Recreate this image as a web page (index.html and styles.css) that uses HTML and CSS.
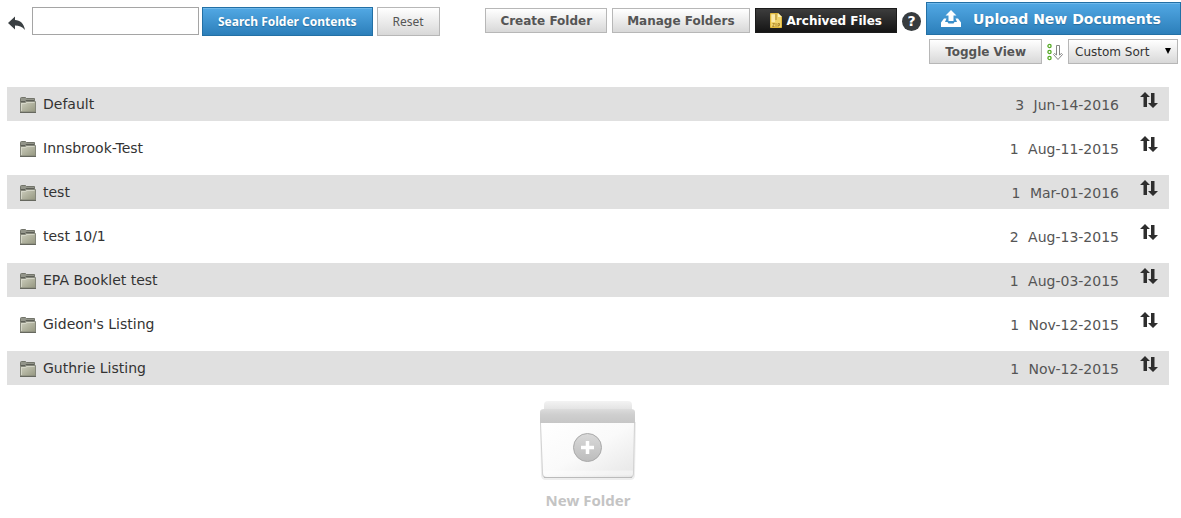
FILE: index.html
```html
<!DOCTYPE html>
<html lang="en">
<head>
    <meta charset="UTF-8">
    <meta name="viewport" content="width=device-width, initial-scale=1.0">
    <title>Documents</title>
    <link rel="stylesheet" href="styles.css">
</head>
<body>
    <!-- shared icons -->
    <svg class="sprite" width="0" height="0" aria-hidden="true">
        <defs>
            <linearGradient id="folderFill" x1="0" y1="0" x2="1" y2="1">
                <stop offset="0" stop-color="#cfd0c0"/>
                <stop offset="1" stop-color="#94967f"/>
            </linearGradient>
            <symbol id="icon-folder" viewBox="0 0 18 18">
                <path d="M1.500 15V2.500Q1.500 1.500 2.500 1.500H6.500L7.500 2.500H15.500V15Z" fill="#93958a" stroke="#73756b"/>
                <path d="M2 5.500H6L7 4.500H15" fill="none" stroke="#5d5f57"/>
                <path d="M1.500 16V6.500H6L7.500 5.500H16.500V16Z" fill="url(#folderFill)" stroke="#85877b"/>
                <path d="M2.500 15V7.500H6.500L8 6.500H15.500" fill="none" stroke="#dedfd3" stroke-opacity=".7"/>
                <path d="M1 16.500H17" stroke="#66685f"/>
            </symbol>
            <symbol id="icon-sort" viewBox="0 0 18 16">
                <path d="M5 0L10 5H7V15H3.500V5H0Z" fill="#2e2e2e"/>
                <path d="M13 16L18 11H14.500V1H11V11H8Z" fill="#2e2e2e"/>
            </symbol>
        </defs>
    </svg>

    <div class="header">
        <form class="search" onsubmit="return false">
            <a href="#" class="back" aria-label="Back">
                <svg width="18" height="15" viewBox="0 0 18 15"><path d="M1 7L8 .5V4C13 4 17 7.500 18 14C15 10.500 12 9.500 8 9.500V13.500Z" fill="#3b4043"/></svg>
            </a>
            <input type="text" class="search-input" aria-label="Search folder contents">
            <button type="submit" class="btn btn-blue btn-search">Search Folder Contents</button>
            <button type="reset" class="btn btn-reset">Reset</button>
        </form>

        <div class="actions">
            <button type="button" class="btn">Create Folder</button>
            <button type="button" class="btn">Manage Folders</button>
            <button type="button" class="btn btn-dark">
                <svg width="12" height="15" viewBox="0 0 12 15">
                    <path d="M.5.500H8L11.500 4V14.500H.5Z" fill="#f0d36c" stroke="#e0b83c"/>
                    <path d="M8 0V4H12Z" fill="#fff3b5"/>
                    <path d="M1.500 1.500H5V9H1.500Z" fill="#fbeaaa"/>
                    <path d="M5 2H7M5 4H7M5 6H7" stroke="#a98630"/>
                    <path d="M2.500 10.500H4.500L2.500 13.500H4.500M6 10V14M8 14V10.500H9.500V12.500H8" fill="none" stroke="#a37c22" stroke-width=".8"/>
                </svg>
                Archived Files
            </button>
            <a href="#" class="help" aria-label="Help">?</a>
        </div>

        <div class="upload">
            <button type="button" class="btn btn-blue btn-upload">
                <svg width="20" height="17" viewBox="0 0 20 17">
                    <path d="M10 0L15.500 5.500H12.500V11H7.500V5.500H4.500Z" fill="#fff"/>
                    <path d="M3 8.500H5.500L4 12H6.500L7.500 13.500H12.500L13.500 12H16L14.500 8.500H17L20 12.500V17H0V12.500Z" fill="#fff"/>
                </svg>
                Upload New Documents
            </button>
            <div class="view">
                <button type="button" class="btn btn-toggle">Toggle View</button>
                <svg width="16" height="18" viewBox="0 0 16 18">
                    <g fill="#fff" stroke="#57ab27" stroke-width="1.300">
                        <circle cx="2.500" cy="3" r="1.600"/>
                        <circle cx="2.500" cy="9" r="1.600"/>
                        <circle cx="2.500" cy="15" r="1.600"/>
                    </g>
                    <path d="M9.500 2.500H12.500V12L14.500 10.500L15.500 11.500L11 16.500L6.500 11.500L7.500 10.500L9.500 12Z" fill="#fff" stroke="#858585"/>
                </svg>
                <div class="sort">
                    <select aria-label="Sort folders">
                        <option>Custom Sort</option>
                        <option>Name</option>
                        <option>Date</option>
                    </select>
                </div>
            </div>
        </div>
    </div>

    <table class="folders">
        <tbody>
            <tr>
                <td class="name"><a href="#"><svg><use href="#icon-folder"/></svg>Default</a></td>
                <td class="info"><span>3</span> <span>Jun-14-2016</span></td>
                <td class="move"><svg><use href="#icon-sort"/></svg></td>
            </tr>
            <tr>
                <td class="name"><a href="#"><svg><use href="#icon-folder"/></svg>Innsbrook-Test</a></td>
                <td class="info"><span>1</span> <span>Aug-11-2015</span></td>
                <td class="move"><svg><use href="#icon-sort"/></svg></td>
            </tr>
            <tr>
                <td class="name"><a href="#"><svg><use href="#icon-folder"/></svg>test</a></td>
                <td class="info"><span>1</span> <span>Mar-01-2016</span></td>
                <td class="move"><svg><use href="#icon-sort"/></svg></td>
            </tr>
            <tr>
                <td class="name"><a href="#"><svg><use href="#icon-folder"/></svg>test 10/1</a></td>
                <td class="info"><span>2</span> <span>Aug-13-2015</span></td>
                <td class="move"><svg><use href="#icon-sort"/></svg></td>
            </tr>
            <tr>
                <td class="name"><a href="#"><svg><use href="#icon-folder"/></svg>EPA Booklet test</a></td>
                <td class="info"><span>1</span> <span>Aug-03-2015</span></td>
                <td class="move"><svg><use href="#icon-sort"/></svg></td>
            </tr>
            <tr>
                <td class="name"><a href="#"><svg><use href="#icon-folder"/></svg>Gideon's Listing</a></td>
                <td class="info"><span>1</span> <span>Nov-12-2015</span></td>
                <td class="move"><svg><use href="#icon-sort"/></svg></td>
            </tr>
            <tr>
                <td class="name"><a href="#"><svg><use href="#icon-folder"/></svg>Guthrie Listing</a></td>
                <td class="info"><span>1</span> <span>Nov-12-2015</span></td>
                <td class="move"><svg><use href="#icon-sort"/></svg></td>
            </tr>
        </tbody>
    </table>

    <div class="tiles">
        <a href="#" class="new-folder">
            <svg width="98" height="82" viewBox="0 0 98 82">
                <defs>
                    <linearGradient id="backFill" x1="0" y1="0" x2="0" y2="1">
                        <stop offset="0" stop-color="#f3f3f3"/>
                        <stop offset="1" stop-color="#dedede"/>
                    </linearGradient>
                    <linearGradient id="bandFill" x1="0" y1="0" x2="0" y2="1">
                        <stop offset="0" stop-color="#dcdcdc"/>
                        <stop offset=".4" stop-color="#cfcfcf"/>
                        <stop offset="1" stop-color="#c6c6c6"/>
                    </linearGradient>
                    <linearGradient id="frontFill" x1="0" y1="0" x2="1" y2="1">
                        <stop offset="0" stop-color="#fff"/>
                        <stop offset=".5" stop-color="#fafafa"/>
                        <stop offset="1" stop-color="#e6e6e6"/>
                    </linearGradient>
                    <linearGradient id="plusFill" x1="0" y1="0" x2="0" y2="1">
                        <stop offset="0" stop-color="#dadada"/>
                        <stop offset="1" stop-color="#bcbcbc"/>
                    </linearGradient>
                </defs>
                <path d="M5 12V5Q5 1 9 1H89Q93 1 93 5V12Z" fill="url(#backFill)"/>
                <path d="M2 75Q2 80 7 80H91Q96 80 96 75L97 22H1Z" fill="#eee"/>
                <path d="M1 23V12Q1 9 5 9H92Q96 9 96 12V23Z" fill="url(#bandFill)"/>
                <path d="M1 23H96L95 73Q95 78 91 78H7Q3 78 3 73Z" fill="#d2d2d2"/>
                <path d="M5 77.500H93" stroke="#bbb"/>
                <path d="M2 23H95L94 72Q94 77 90 77H8Q4 77 4 72Z" fill="url(#frontFill)"/>
                <path d="M4 73H94" stroke="#fff" stroke-opacity=".4" stroke-width="5"/>
                <circle cx="48.500" cy="47.500" r="14" fill="url(#plusFill)" stroke="#aaa"/>
                <path d="M48.500 41V54M42 47.500H55" stroke="#fff" stroke-width="3.500"/>
            </svg>
            New Folder
        </a>
    </div>
</body>
</html>
```
FILE: styles.css
```css
* {
    margin: 0;
    padding: 0;
    box-sizing: border-box;
}

body {
    font-family: Verdana, 'DejaVu Sans', sans-serif;
    font-size: 14px;
    color: #333;
    background: #fff;
}

a {
    color: inherit;
    text-decoration: none;
}

svg {
    display: block;
    flex-shrink: 0;
}

.sprite {
    position: absolute;
}

/* toolbar */
.header {
    display: flex;
    align-items: flex-start;
    padding: 2px 0 0 7px;
}

.search {
    display: flex;
    align-items: flex-start;
    gap: 4px;
    margin: 5px auto 0 0;
}

.back {
    margin: 9px 3px 0 0;
}

.search-input {
    width: 167px;
    height: 28px;
    padding: 0 5px;
    border: 1px solid #a5a5a5;
    font: inherit;
    margin-right: -1px;
}

.btn {
    height: 25px;
    padding: 0 14px;
    border: 1px solid #b7b7b7;
    background: linear-gradient(#fff, #d8d8d8);
    color: #555;
    font-family: inherit;
    font-size: 12px;
    font-weight: bold;
    white-space: nowrap;
    cursor: pointer;
}

.btn-blue {
    border-color: #2370a5;
    background: linear-gradient(#52a8e4, #2c7fba);
    box-shadow: inset 0 1px 0 #70b9eb;
    color: #fff;
    text-shadow: 0 1px 1px #286f9f;
}

.btn-search,
.btn-reset {
    height: 29px;
    padding: 0 15px;
    font-family: Tahoma, 'Noto Sans', sans-serif;
}

.btn-reset {
    font-weight: normal;
}

.btn-dark {
    display: flex;
    align-items: center;
    gap: 5px;
    border-color: #1b1b1b;
    background: linear-gradient(#3d3d3d, #151515);
    color: #fff;
}

.actions {
    display: flex;
    gap: 5px;
    margin-top: 6px;
}

.help {
    width: 19px;
    height: 19px;
    margin: 4px 5px 0 0;
    border-radius: 50%;
    background: #373c3f;
    color: #fff;
    font-size: 14px;
    font-weight: bold;
    line-height: 19px;
    text-align: center;
}

.upload {
    width: 255px;
}

.btn-upload {
    display: flex;
    align-items: center;
    gap: 12px;
    width: 100%;
    height: 33px;
    font-size: 14px;
}

.view {
    display: flex;
    align-items: center;
    justify-content: flex-end;
    gap: 5px;
    padding: 4px 3px 0 0;
}

.btn-toggle {
    padding: 0 15px;
}

.sort {
    position: relative;
}

.sort select {
    width: 110px;
    height: 25px;
    padding: 0 6px;
    border: 1px solid #b7b7b7;
    border-radius: 0;
    background: linear-gradient(#fff, #d8d8d8);
    color: #333;
    font-family: inherit;
    font-size: 12px;
    appearance: none;
}

/* arrow over the drop-down */
.sort::after {
    content: '';
    position: absolute;
    top: 9px;
    right: 7px;
    border: 3px solid transparent;
    border-top: 6px solid #000;
    border-bottom: 0;
    pointer-events: none;
}

/* folder list */
.folders {
    width: calc(100% - 19px);
    margin: 13px 12px 0 7px;
    border-spacing: 0 10px;
}

.folders tr {
    height: 34px;
}

.folders tr:nth-child(odd) {
    background: #e0e0e0;
}

.name a {
    display: flex;
    align-items: center;
    gap: 6px;
    padding-left: 12px;
}

.name svg {
    width: 18px;
    height: 18px;
    margin-top: 1px;
}

.info {
    padding-top: 2px;
    color: #555;
    text-align: right;
    white-space: nowrap;
}

.info span + span {
    margin-left: 5px;
}

.move {
    width: 50px;
    padding: 5px 11px 0 21px;
    vertical-align: top;
}

.move svg {
    width: 18px;
    height: 16px;
    cursor: move;
}

/* new folder tile */
.tiles {
    display: flex;
    justify-content: center;
    margin: 5px 12px 0 7px;
}

.new-folder {
    display: flex;
    flex-direction: column;
    align-items: center;
    gap: 8px;
    color: #c4c4c4;
    font-family: Tahoma, 'Noto Sans', sans-serif;
    font-size: 15px;
    font-weight: bold;
}
```
